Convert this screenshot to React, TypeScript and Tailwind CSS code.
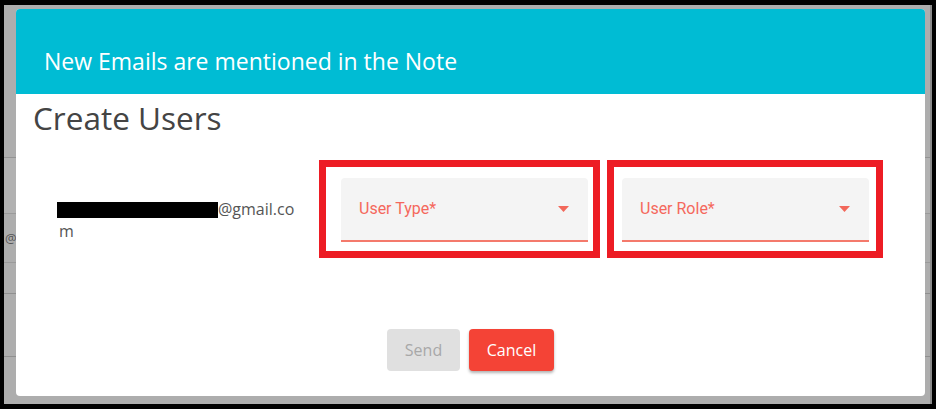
import React from "react";

function Arrow() {
  return (
    <svg width="11" height="6" viewBox="0 0 11 6" className="shrink-0">
      <path d="M0 0 L11 0 L5.5 6 Z" fill="#f2685b" />
    </svg>
  );
}

function Select({ label }: { label: string }) {
  return (
    <div className="w-[247px] h-[64px] flex flex-col">
      <div className="flex-1 bg-[#f4f4f4] rounded-t-[4px] flex items-center justify-between pl-[18px] pr-[19px]">
        <span className="text-[16px] leading-[20px] text-[#f4685c]" style={{ fontFamily: "Roboto, 'Liberation Sans', sans-serif" }}>
          {label}
        </span>
        <Arrow />
      </div>
      <div className="h-[2px] bg-[#f47a6c]" />
    </div>
  );
}

export default function App() {
  const os = { fontFamily: "'Open Sans', 'Liberation Sans', sans-serif" };
  return (
    <div className="w-[936px] h-[409px] bg-black pt-[5px] pl-[4px]" style={os}>
      <div className="relative w-[928px] h-[399px] bg-[#adadad] overflow-hidden border-r-[2px] border-[#8a8a8a]">
        {/* underlying page rows */}
        <div className="flex flex-col">
          <div className="h-[152px]" />
          <div className="h-[56px] border-t border-[#939393] bg-[#b1b1b1]" />
          <div className="h-[49px] border-t border-[#9a9a9a] text-[13px] text-[#555] leading-[49px] pl-[1px]">@g</div>
          <div className="h-[31px] border-t border-[#9a9a9a]" />
          <div className="h-[63px] border-t border-[#8f8f8f]" />
          <div className="h-[40px] border-t border-[#8f8f8f]" />
        </div>

        {/* modal */}
        <div className="absolute left-[12px] top-[4px] w-[909px] h-[387px] bg-white rounded-[4px] flex flex-col overflow-hidden">
          <div className="h-[85px] bg-[#00bcd4] pl-[28px] pt-[37px]">
            <div className="text-[23px] leading-[31px] text-white">New Emails are mentioned in the Note</div>
          </div>
          <div className="pl-[17px] mt-[3px] text-[31.5px] leading-[42px] text-[#444444]">Create Users</div>

          <div className="flex items-start pl-[41px] mt-[21px]">
            <div className="w-[262px] mt-[38px] text-[16px] leading-[22px] text-[#555555]">
              <div className="flex items-start h-[22px]">
                <span className="inline-block w-[161px] h-[16px] bg-black mt-[4px]" />
                <span>@gmail.co</span>
              </div>
              <div className="pl-[2px]">m</div>
            </div>
            <div className="w-[281px] h-[98px] border-[7px] border-[#ed1c24] pl-[15px] pt-[11px]">
              <Select label="User Type*" />
            </div>
            <div className="ml-[7px] w-[276px] h-[98px] border-[7px] border-[#ed1c24] pl-[8px] pt-[11px]">
              <Select label="User Role*" />
            </div>
          </div>

          <div className="flex justify-center mt-[71px]">
            <button className="w-[73px] h-[42px] rounded-[4px] bg-[#e0e0e0] text-[16px] text-[#a8a8a8]">Send</button>
            <button className="ml-[9px] w-[85px] h-[42px] rounded-[4px] bg-[#f44336] text-[16px] font-medium text-white shadow-[0_2px_3px_rgba(0,0,0,0.3)]">
              Cancel
            </button>
          </div>
        </div>
      </div>
    </div>
  );
}
